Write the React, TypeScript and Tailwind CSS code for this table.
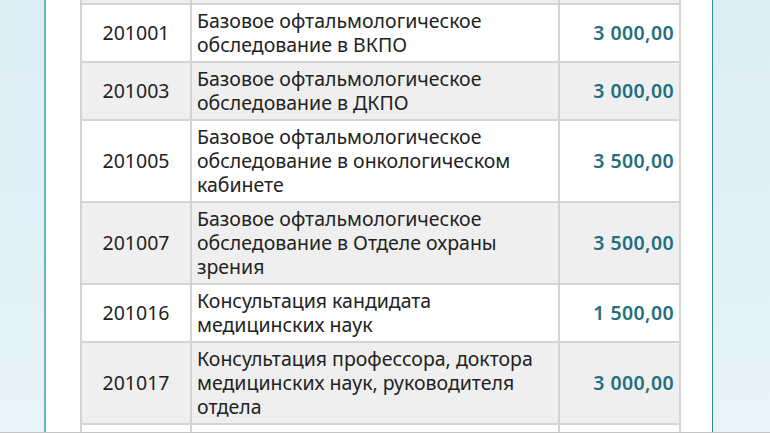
import React from "react";

type Row = { code: string; name: string; price: string };

const rows: Row[] = [
  { code: "201000", name: "Базовое офтальмологическое обследование", price: "2 500,00" },
  { code: "201001", name: "Базовое офтальмологическое обследование в ВКПО", price: "3 000,00" },
  { code: "201003", name: "Базовое офтальмологическое обследование в ДКПО", price: "3 000,00" },
  { code: "201005", name: "Базовое офтальмологическое обследование в онкологическом кабинете", price: "3 500,00" },
  { code: "201007", name: "Базовое офтальмологическое обследование в Отделе охраны зрения", price: "3 500,00" },
  { code: "201016", name: "Консультация кандидата медицинских наук", price: "1 500,00" },
  { code: "201017", name: "Консультация профессора, доктора медицинских наук, руководителя отдела", price: "3 000,00" },
  { code: "201018", name: "Консультация заведующего отделением", price: "1 000,00" },
];

export default function App() {
  return (
    <div
      className="flex h-[433px] w-[770px] overflow-hidden border-b border-[#c4c4c4] bg-[#e3f1f7] text-[19.5px] leading-6 text-[#222]"
      style={{ fontFamily: '"Noto Sans", "Open Sans", sans-serif' }}
    >
      <div className="w-[44px] shrink-0 bg-gradient-to-b from-[#dcedf4] to-[#e7f3f9]" />
      <div className="w-[669px] shrink-0 border-l-2 border-r border-l-[#63b9c3] border-r-[#2c8c99] bg-white pl-[34px]">
        <table className="mt-[-53px] border-separate border-spacing-0">
          <tbody>
            {rows.map((r, i) => (
              <tr key={r.code} className={i % 2 === 0 ? "bg-[#efefef]" : "bg-white"}>
                <td className="w-[112px] border-b-2 border-l-2 border-r-2 border-[#d4d4d4] px-[5px] py-1 text-center align-middle">
                  {r.code}
                </td>
                <td className="w-[368px] border-b-2 border-r-2 border-[#d4d4d4] px-[5px] py-1 align-middle">
                  {r.name}
                </td>
                <td className="w-[121px] border-b-2 border-r-2 border-[#d4d4d4] px-[5px] py-1 text-right align-middle font-semibold tracking-[0.4px] text-[#1e6f80]">
                  {r.price}
                </td>
              </tr>
            ))}
          </tbody>
        </table>
      </div>
      <div className="flex-1 bg-gradient-to-b from-[#dcedf4] to-[#e7f3f9]" />
    </div>
  );
}
